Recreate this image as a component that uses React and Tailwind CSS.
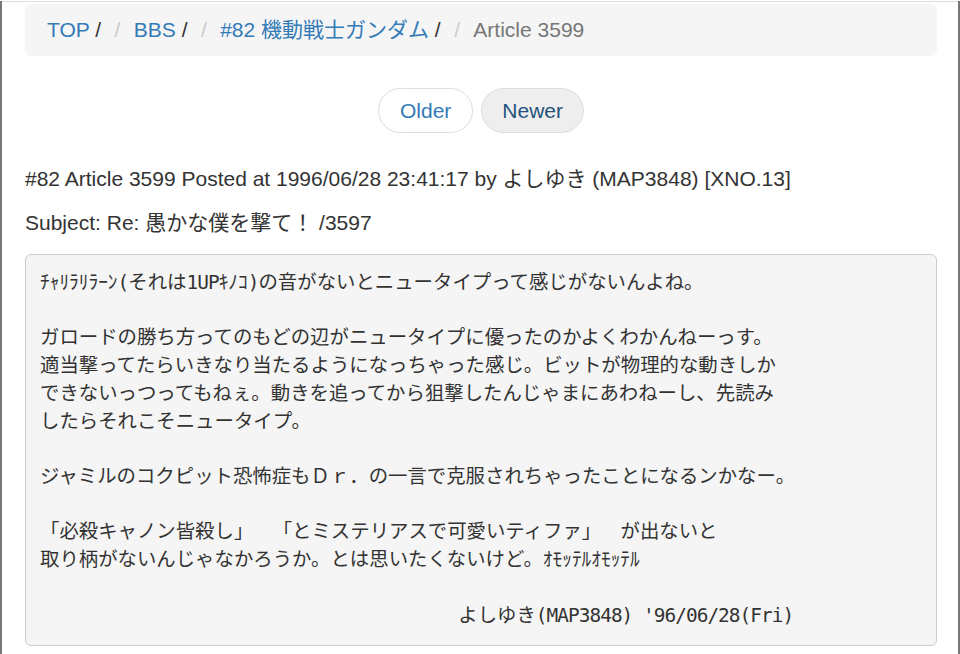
const crumbs = [
  { label: "TOP", href: "#" },
  { label: "BBS", href: "#" },
  { label: "#82 機動戦士ガンダム", href: "#" },
];

const lines = [
  "ﾁｬﾘﾗﾘﾗｰﾝ(それは1UPｷﾉｺ)の音がないとニュータイプって感じがないんよね。",
  "",
  "ガロードの勝ち方ってのもどの辺がニュータイプに優ったのかよくわかんねーっす。",
  "適当撃ってたらいきなり当たるようになっちゃった感じ。ビットが物理的な動きしか",
  "できないっつってもねぇ。動きを追ってから狙撃したんじゃまにあわねーし、先読み",
  "したらそれこそニュータイプ。",
  "",
  "ジャミルのコクピット恐怖症もＤｒ．の一言で克服されちゃったことになるンかなー。",
  "",
  "「必殺キャノン皆殺し」　「とミステリアスで可愛いティファ」　が出ないと",
  "取り柄がないんじゃなかろうか。とは思いたくないけど。ｵﾓｯﾃﾙｵﾓｯﾃﾙ",
  "",
  "                                       よしゆき(MAP3848) '96/06/28(Fri)",
];

// ASCII runs get narrowed so half-width Latin sits at ~0.55em like the original mono face
function Line({ text }) {
  const parts = text.split(/([\x20-\x7e]+)/).filter(Boolean);
  return (
    <>
      {parts.map((p, i) =>
        /^[\x20-\x7e]+$/.test(p) ? (
          <span key={i} className="tracking-[-0.95px]">{p}</span>
        ) : (
          <span key={i}>{p}</span>
        )
      )}
      {"\n"}
    </>
  );
}

export default function App() {
  return (
    <div className="min-h-screen bg-white border-x-2 border-[#777] font-['Liberation_Sans','Noto_Sans_CJK_JP',sans-serif] text-[21px] leading-[30px] text-[#333]">
      <div className="mt-px h-px bg-[#ddd]" />
      <div className="pl-[23px] pr-[21px] pt-[2px]">
        <ol className="bg-[#f5f5f5] rounded-[6px] py-[11px] px-[22px]">
          {crumbs.map((c, i) => (
            <li key={c.label} className={`inline-block ${i > 0 ? "ml-[6px]" : ""}`}>
              {i > 0 && <span className="px-[7.5px] text-[#ccc]">/&nbsp;</span>}
              <a href={c.href} className="text-[#337ab7]">{c.label}</a> /
            </li>
          ))}
          <li className="inline-block ml-[6px] text-[#777]">
            <span className="px-[7.5px] text-[#ccc]">/&nbsp;</span>
            Article 3599
          </li>
        </ol>

        <ul className="mt-[32px] flex justify-center gap-[8px]">
          <li>
            <a href="#" className="block px-[21px] py-[6.5px] rounded-[23px] border border-[#ddd] bg-white text-[#337ab7]">
              Older
            </a>
          </li>
          <li>
            <a href="#" className="block px-[20px] py-[6.5px] rounded-[23px] border border-[#ddd] bg-[#eee] text-[#23527c]">
              Newer
            </a>
          </li>
        </ul>

        <p className="mt-[31px] mb-[14px]">
          #82 Article 3599 Posted at 1996/06/28 23:41:17 by よしゆき (MAP3848) [XNO.13]
        </p>
        <p className="mb-[16px]">Subject: Re: 愚かな僕を撃て！ /3597</p>

        <pre className="whitespace-pre bg-[#f5f5f5] border border-[#ccc] rounded-[6px] pt-[14px] px-[14px] pb-[16px] font-['DejaVu_Sans_Mono','Noto_Sans_CJK_JP',monospace] text-[19.4px] leading-[1.42857] text-[#333] [text-spacing-trim:space-all]">
          {lines.map((l, i) => (
            <Line key={i} text={l} />
          ))}
        </pre>
      </div>
    </div>
  );
}
